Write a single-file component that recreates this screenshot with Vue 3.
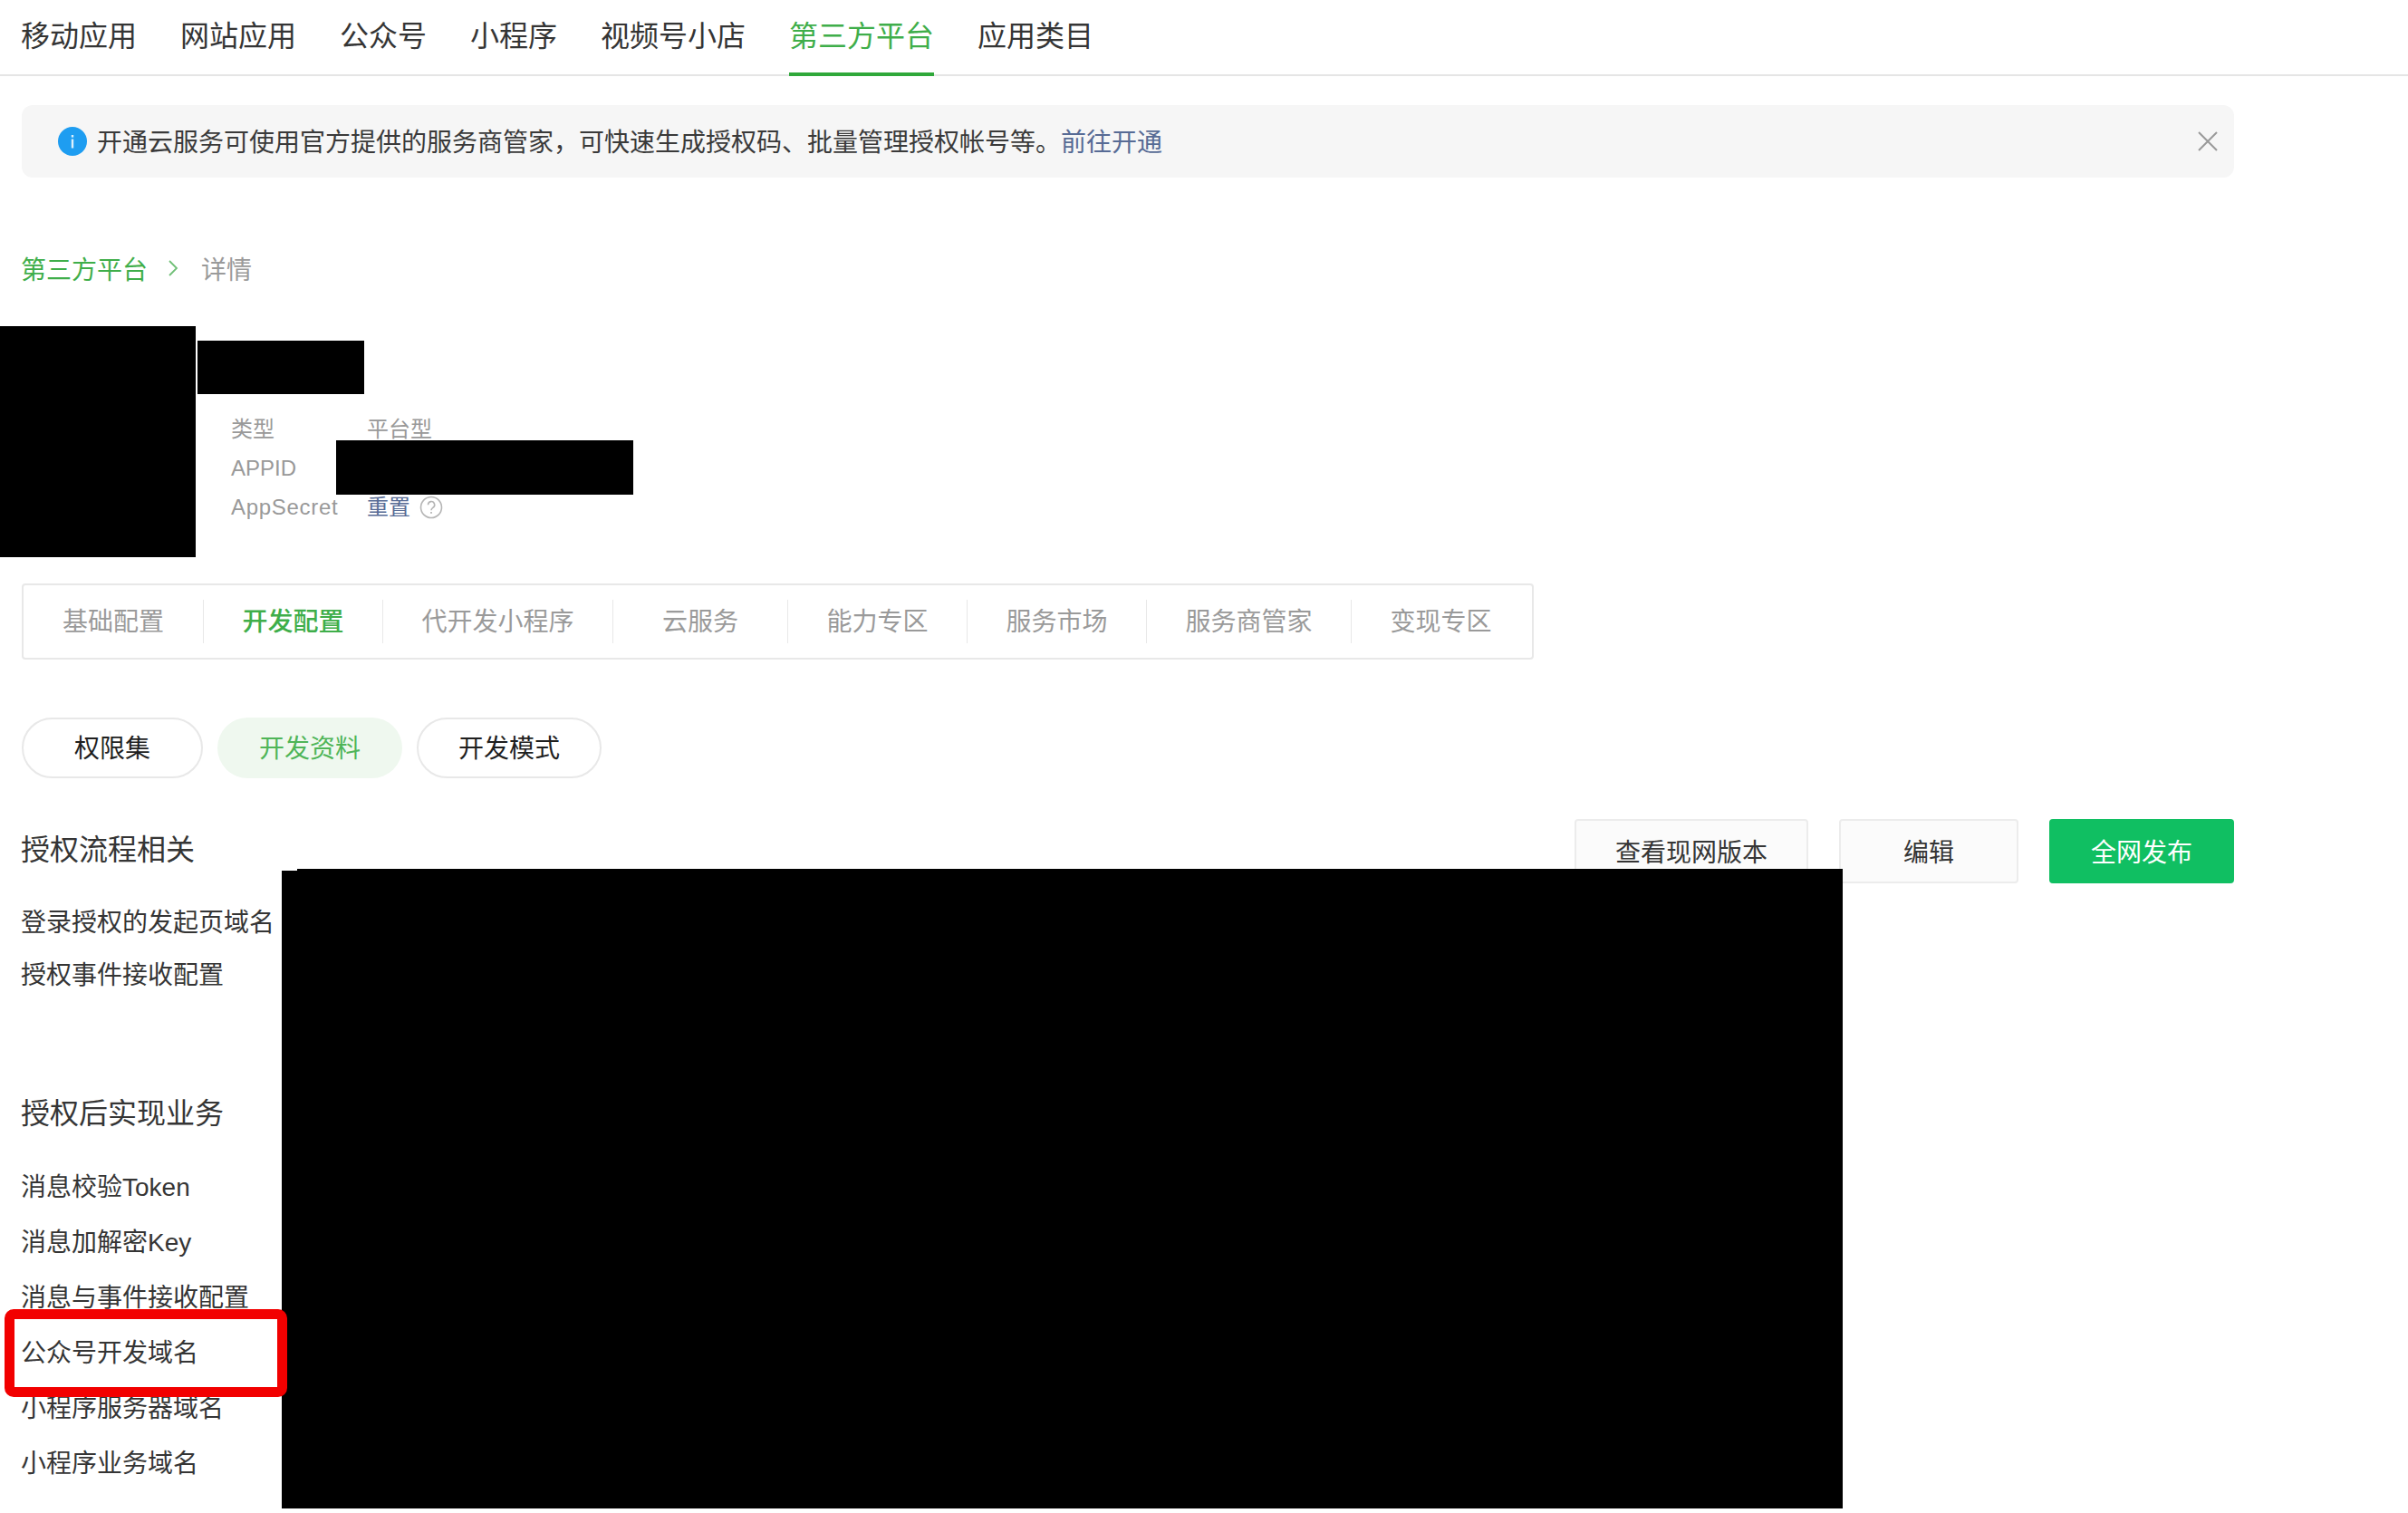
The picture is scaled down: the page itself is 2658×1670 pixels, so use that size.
<script setup>
const navItems = [
  { label: '移动应用' }, { label: '网站应用' }, { label: '公众号' }, { label: '小程序' },
  { label: '视频号小店' }, { label: '第三方平台', active: true }, { label: '应用类目' }
]
const tabs = [
  { label: '基础配置' }, { label: '开发配置', active: true }, { label: '代开发小程序' },
  { label: '云服务', wide: true }, { label: '能力专区' }, { label: '服务市场' },
  { label: '服务商管家' }, { label: '变现专区' }
]
const pills = [{ label: '权限集' }, { label: '开发资料', active: true }, { label: '开发模式' }]
const authRows = ['登录授权的发起页域名', '授权事件接收配置']
const bizRows = ['消息校验Token', '消息加解密Key', '消息与事件接收配置', '公众号开发域名', '小程序服务器域名', '小程序业务域名']
const notice = '开通云服务可使用官方提供的服务商管家\uFF0C可快速生成授权码、批量管理授权帐号等。'
</script>

<template>
  <div class="page">
    <nav class="nav">
      <span v-for="n in navItems" :key="n.label" class="nav-item" :class="{ on: n.active }">{{ n.label }}</span>
    </nav>

    <div class="alert">
      <svg class="alert-icon" viewBox="0 0 32 32" aria-hidden="true">
        <circle cx="16" cy="16" r="16" fill="#1e9df1" />
        <rect x="14.8" y="13.5" width="2.4" height="10" fill="#fff" opacity="0.85" />
        <rect x="14.8" y="9" width="2.4" height="2.6" fill="#fff" opacity="0.85" />
      </svg>
      <span class="alert-text">{{ notice }}<a class="link">前往开通</a></span>
      <svg class="alert-close" viewBox="0 0 22 22" aria-hidden="true">
        <path d="M1 1L21 21M21 1L1 21" stroke="#999" stroke-width="2" fill="none" />
      </svg>
    </div>

    <div class="crumbs">
      <span class="crumb-link">第三方平台</span>
      <svg class="crumb-arrow" viewBox="0 0 12 20" aria-hidden="true">
        <path d="M2 2L10 10L2 18" stroke="#6fbf76" stroke-width="1.8" fill="none" />
      </svg>
      <span class="crumb-now">详情</span>
    </div>

    <section class="info">
      <div class="avatar"></div>
      <div class="info-main">
        <div class="name"></div>
        <dl class="meta">
          <div class="meta-row"><dt>类型</dt><dd>平台型</dd></div>
          <div class="meta-row"><dt>APPID</dt><dd></dd></div>
          <div class="meta-row">
            <dt class="secret">AppSecret</dt>
            <dd class="reset">
              <a class="link">重置</a>
              <svg class="help" viewBox="0 0 26 26" aria-hidden="true">
                <circle cx="13" cy="13" r="11.5" stroke="#b5b5b5" stroke-width="1.6" fill="none" />
                <path d="M9.5 10.2a3.6 3.6 0 1 1 5.4 3.1c-1.2.8-1.9 1.3-1.9 2.9" stroke="#b5b5b5" stroke-width="1.6" fill="none" />
                <rect x="12.1" y="18" width="1.8" height="1.8" fill="#b5b5b5" />
              </svg>
            </dd>
          </div>
        </dl>
      </div>
    </section>

    <div class="tabs">
      <span v-for="t in tabs" :key="t.label" class="tab" :class="{ on: t.active, wide: t.wide }">{{ t.label }}</span>
    </div>

    <div class="pills">
      <span v-for="p in pills" :key="p.label" class="pill" :class="{ on: p.active }">{{ p.label }}</span>
    </div>

    <div class="head-row">
      <h2 class="heading">授权流程相关</h2>
      <div class="actions">
        <button class="btn">查看现网版本</button>
        <button class="btn">编辑</button>
        <button class="btn primary">全网发布</button>
      </div>
    </div>
    <ul class="rows first">
      <li v-for="r in authRows" :key="r">{{ r }}</li>
    </ul>

    <h2 class="heading second">授权后实现业务</h2>
    <ul class="rows biz">
      <li v-for="r in bizRows" :key="r">{{ r }}</li>
    </ul>

    <div class="mask mask-appid"></div>
    <div class="mask mask-main"></div>
    <div class="highlight"></div>
  </div>
</template>

<style scoped>
.page {
  position: relative;
  width: 2658px;
  height: 1670px;
  overflow: hidden;
  background: #fff;
  color: #353535;
  font-family: "Liberation Sans", "Noto Sans CJK SC", sans-serif;
  font-size: 28px;
}
.nav {
  display: flex;
  gap: 48px;
  height: 82px;
  padding-left: 23px;
  border-bottom: 2px solid #e5e5e5;
}
.nav-item {
  height: 84px;
  box-sizing: border-box;
  font-size: 32px;
  line-height: 80px;
}
.nav-item.on {
  color: #3fae4a;
  border-bottom: 4px solid #2fa83a;
}
.alert {
  display: flex;
  align-items: center;
  box-sizing: border-box;
  width: 2442px;
  height: 80px;
  margin: 32px 0 0 24px;
  padding: 0 18px 0 40px;
  border-radius: 12px;
  background: #f6f6f6;
}
.alert-icon {
  width: 32px;
  height: 32px;
  margin-right: 11px;
}
.alert-text {
  flex: 1;
  padding-bottom: 2px;
  color: #3a3a3a;
}
.alert-close {
  width: 22px;
  height: 22px;
}
.link {
  color: #576b95;
}
.crumbs {
  display: flex;
  align-items: center;
  height: 40px;
  margin: 80px 0 0 23px;
}
.crumb-link {
  color: #3fae4a;
}
.crumb-arrow {
  width: 12px;
  height: 20px;
  margin: 0 25px 0 22px;
}
.crumb-now {
  color: #9a9a9a;
}
.info {
  display: flex;
  height: 255px;
  margin-top: 44px;
}
.avatar {
  width: 216px;
  height: 255px;
  background: #000;
}
.info-main {
  margin-left: 2px;
  padding-top: 16px;
}
.name {
  width: 184px;
  height: 59px;
  background: #000;
}
.meta {
  margin: 17px 0 0 37px;
  font-size: 24px;
  color: #999;
}
.meta-row {
  display: flex;
  height: 43px;
  line-height: 43px;
}
.meta-row dt {
  width: 150px;
}
.meta-row dt.secret {
  letter-spacing: 0.7px;
}
.meta-row dd {
  margin: 0;
}
.reset {
  display: flex;
  align-items: center;
  gap: 10px;
}
.help {
  width: 26px;
  height: 26px;
}
.tabs {
  display: flex;
  align-items: center;
  box-sizing: border-box;
  width: 1669px;
  height: 84px;
  margin: 29px 0 -1px 24px;
  border: 2px solid #e8e8e8;
  border-radius: 4px;
}
.tab {
  flex: none;
  height: 48px;
  padding: 0 42.5px;
  border-left: 1px solid #e8e8e8;
  line-height: 50px;
  white-space: nowrap;
  color: #9a9a9a;
}
.tab:first-child {
  padding: 0 43px;
  border-left: 0;
}
.tab.wide {
  padding: 0 54px;
}
.tab.on {
  color: #3fae4a;
  font-weight: 500;
}
.pills {
  display: flex;
  gap: 16px;
  margin: 65px 0 0 24px;
}
.pill {
  box-sizing: border-box;
  min-width: 200px;
  height: 67px;
  padding: 0 44px;
  border: 2px solid #e8e8e8;
  border-radius: 34px;
  line-height: 65px;
  text-align: center;
  color: #1f1f1f;
}
.pill.on {
  border-color: transparent;
  background: #eff8ef;
  color: #4fb558;
}
.head-row {
  display: flex;
  justify-content: space-between;
  align-items: center;
  width: 2443px;
  height: 71px;
  margin: 45px 0 0 23px;
}
.heading {
  margin: 0 0 3px;
  font-size: 32px;
  font-weight: 400;
  line-height: 60px;
  color: #353535;
}
.heading.second {
  margin: 93px 0 0 23px;
}
.actions {
  display: flex;
  gap: 34px;
}
.btn {
  box-sizing: border-box;
  min-width: 198px;
  height: 71px;
  padding: 0 43px 2px;
  border: 2px solid #ececec;
  border-radius: 4px;
  background: #fbfbfb;
  font: inherit;
  color: #353535;
}
.btn.primary {
  min-width: 204px;
  border-color: #10bf62;
  background: #10bf62;
  color: #fff;
}
.rows {
  margin: 0 0 0 23px;
  padding: 0;
  list-style: none;
}
.rows.first {
  margin-top: 15px;
}
.rows.first li {
  height: 58px;
  line-height: 58px;
}
.rows.biz {
  margin-top: 21px;
}
.rows.biz li {
  height: 61px;
  line-height: 61px;
}
.mask {
  position: absolute;
  background: #000;
}
.mask-appid {
  left: 371px;
  top: 486px;
  width: 328px;
  height: 60px;
}
.mask-main {
  left: 311px;
  top: 961px;
  width: 1723px;
  height: 704px;
}
.mask-main::before {
  content: "";
  position: absolute;
  left: 17px;
  right: 0;
  top: -2px;
  height: 2px;
  background: #000;
}
.highlight {
  position: absolute;
  left: 5px;
  top: 1445px;
  box-sizing: border-box;
  width: 312px;
  height: 97px;
  border: 11px solid #f20000;
  border-radius: 10px;
}
</style>
